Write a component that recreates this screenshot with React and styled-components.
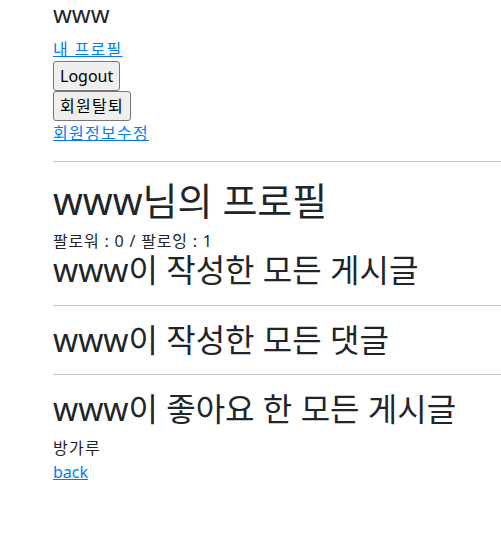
import styled, { createGlobalStyle } from 'styled-components';

const GlobalStyle = createGlobalStyle`
  html, body {
    margin: 0;
    padding: 0;
    background: #fff;
  }
  body {
    font-family: "Noto Sans", "Noto Sans CJK KR", sans-serif;
    font-size: 16px;
    line-height: 1.5;
    color: #212529;
  }
`;

const Page = styled.div`
  padding-left: 53px;
  overflow: hidden;
`;

// heading sizes follow the reference: 24 / 38 / 32
const Heading = styled.div`
  margin: 0 0 8px;
  font-weight: 400;
  font-size: ${(p) => p.size}px;
  line-height: ${(p) => p.lh}px;
`;

const TextLink = styled.a`
  display: block;
  width: fit-content;
  color: #007bff;
  text-decoration: underline;
  letter-spacing: ${(p) => (p.$ko ? '1.3px' : 'normal')};
  cursor: pointer;
`;

const Button = styled.button`
  display: block;
  margin: 0;
  padding: 1px 6px;
  height: 30px;
  font-family: inherit;
  font-size: 16px;
  line-height: 1.5;
  letter-spacing: ${(p) => (p.$ko ? '1.3px' : 'normal')};
  color: #000;
  background: #efefef;
  border: 1px solid #767676;
  border-radius: 3px;
`;

const Rule = styled.hr`
  margin: 16px 0;
  height: 0;
  border: 0;
  border-top: 1px solid #212529;
  opacity: 0.25;
`;

const Follow = styled.div`
  line-height: 21px;
  letter-spacing: 0.8px;
`;

const Text = styled.div`
  letter-spacing: 1.3px;
`;

export default function App() {
  const user = 'www';
  return (
    <>
      <GlobalStyle />
      <Page>
        <Heading size={24} lh={28.8}>{user}</Heading>
        <TextLink $ko>내 프로필</TextLink>
        <Button>Logout</Button>
        <Button $ko>회원탈퇴</Button>
        <TextLink $ko>회원정보수정</TextLink>
        <Rule />
        <Heading size={38} lh={45}>{user}님의 프로필</Heading>
        <Follow>팔로워 : 0 / 팔로잉 : 1</Follow>
        <Heading size={32} lh={36.8}>{user}이 작성한 모든 게시글</Heading>
        <Rule />
        <Heading size={32} lh={36.8}>{user}이 작성한 모든 댓글</Heading>
        <Rule />
        <Heading size={32} lh={36.8}>{user}이 좋아요 한 모든 게시글</Heading>
        <Text>방가루</Text>
        <TextLink>back</TextLink>
      </Page>
    </>
  );
}
